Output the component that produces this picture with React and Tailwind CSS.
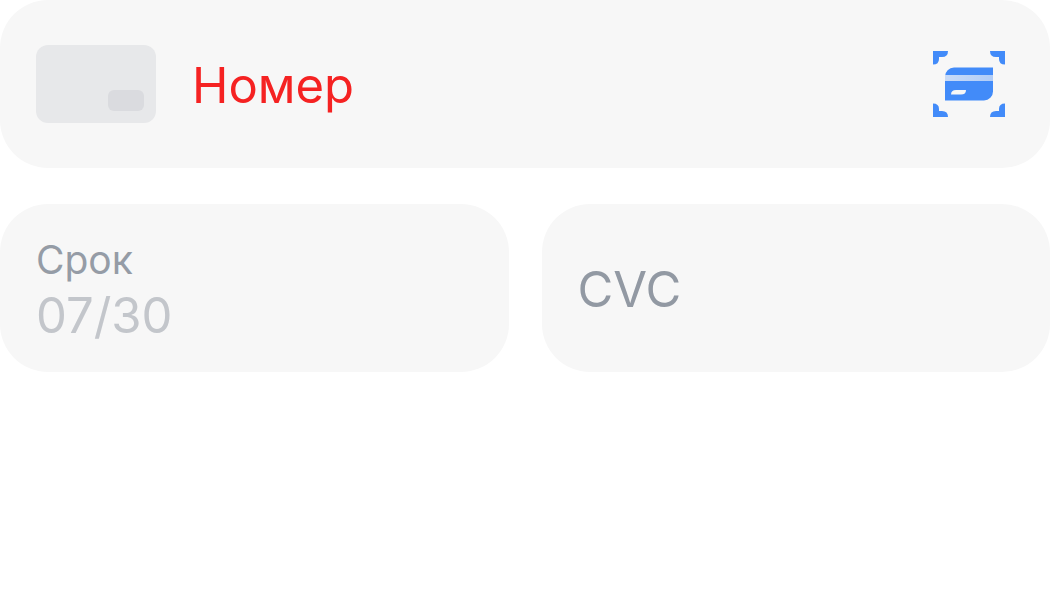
import React from "react";

function ScanIcon() {
  return (
    <svg viewBox="0 0 72 66" className="h-[66px] w-[72px]" fill="#428bf9" aria-hidden="true">
      <defs>
        <linearGradient id="stripe" x1="0" x2="1" y1="0" y2="0">
          <stop offset="0" stopColor="#c9dbf7" />
          <stop offset="1" stopColor="#b0ccf7" />
        </linearGradient>
      </defs>
      <path d="M0 0H15Q15 6 9 6H6V8Q6 13.5 0 13.5Z" />
      <path d="M72 0H57Q57 6 63 6H66V8Q66 13.5 72 13.5Z" />
      <path d="M0 66H15Q15 60 9 60H6V58Q6 52.5 0 52.5Z" />
      <path d="M72 66H57Q57 60 63 60H66V58Q66 52.5 72 52.5Z" />
      <path d="M12 25.5A9 9 0 0 1 21 16.5H60V40.5A9 9 0 0 1 51 49.5H12Z" />
      <path d="M12 24H60V30H12Z" fill="url(#stripe)" />
      <path d="M18 43.5Q18 39 23 39H33Q33 43.5 28 43.5Z" fill="#f7f7f7" />
    </svg>
  );
}

export default function App() {
  return (
    <main className="min-h-screen bg-white font-['Inter','Liberation_Sans',sans-serif]">
      <form className="flex flex-col gap-9" onSubmit={(e) => e.preventDefault()}>
        <div className="flex h-42 items-center rounded-[48px] bg-[#f7f7f7] pr-[45px] pl-9">
          <div className="flex h-[78px] w-[120px] shrink-0 items-end justify-end rounded-xl bg-[#e7e8ea] p-3" aria-hidden="true">
            <div className="h-[21px] w-9 rounded-md bg-[#dadbdf]" />
          </div>
          <input
            aria-label="Номер"
            placeholder="Номер"
            inputMode="numeric"
            className="ml-9 h-16 min-w-0 flex-1 bg-transparent pt-1 text-[49px] text-[#f52222] outline-none placeholder:text-[#f52222] placeholder:opacity-100"
          />
          <button type="button" aria-label="Сканировать карту" className="shrink-0">
            <ScanIcon />
          </button>
        </div>
        <div className="grid grid-cols-2 gap-[33px]">
          <div className="flex h-42 flex-col justify-center rounded-[48px] bg-[#f7f7f7] px-9 pt-2">
            <label htmlFor="expiry" className="text-[39px] leading-[48px] text-[#959ca6]">Срок</label>
            <input
              id="expiry"
              placeholder="07/30"
              inputMode="numeric"
              className="h-16 w-full bg-transparent text-[49px] outline-none placeholder:text-[#c3c6cb] placeholder:opacity-100"
            />
          </div>
          <div className="flex h-42 items-center rounded-[48px] bg-[#f7f7f7] px-9">
            <input
              aria-label="CVC"
              placeholder="CVC"
              inputMode="numeric"
              className="h-16 w-full bg-transparent pt-1 text-[49px] outline-none placeholder:text-[#9299a3] placeholder:opacity-100"
            />
          </div>
        </div>
      </form>
    </main>
  );
}
